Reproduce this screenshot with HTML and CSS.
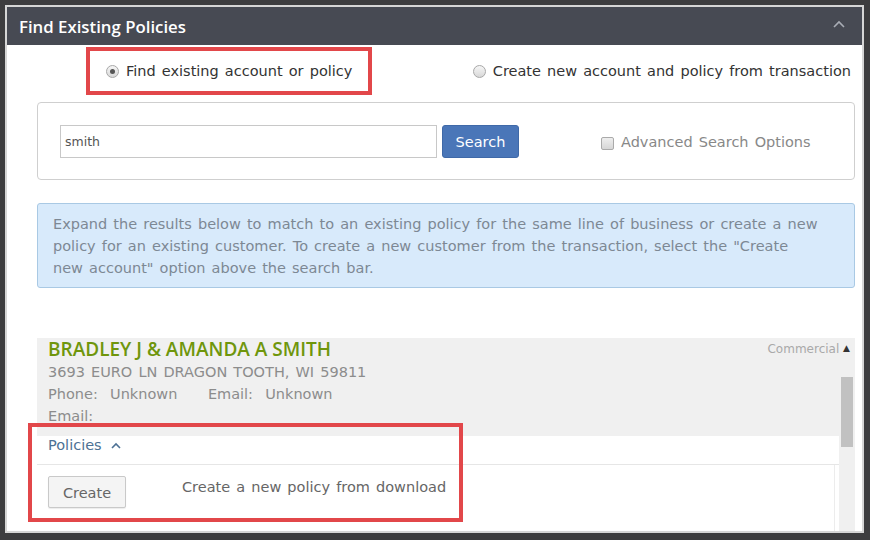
FILE: index.html
```html
<!DOCTYPE html>
<html lang="en">
<head>
  <meta charset="UTF-8" />
  <title>Find Existing Policies</title>
  <link rel="stylesheet" href="styles.css">
</head>
<body>
  <div class="frame">
    <div class="panel">
      <div class="panel-head">
        <h2>Find Existing Policies</h2>
        <svg class="collapse" width="12" height="8" viewBox="0 0 12 8"><path d="M1 7 L6 2 L11 7" fill="none" stroke="#a9adb5" stroke-width="1.6"/></svg>
      </div>

      <div class="panel-body">
        <div class="choices">
          <label class="choice marked"><span class="radio checked"></span>Find existing account or policy</label>
          <label class="choice"><span class="radio"></span>Create new account and policy from transaction</label>
        </div>

        <div class="well">
          <input class="search-input" type="text" value="smith" />
          <button class="btn-search">Search</button>
          <label class="adv"><span class="check"></span>Advanced Search Options</label>
        </div>

        <div class="info">
          Expand the results below to match to an existing policy for the same line of business or create a new<br>
          policy for an existing customer. To create a new customer from the transaction, select the "Create<br>
          new account" option above the search bar.
        </div>

        <div class="result">
          <div class="result-head">
            <span class="name">BRADLEY J &amp; AMANDA A SMITH</span>
            <span class="kind">Commercial <span class="tri">&#9650;</span></span>
          </div>
          <div class="result-body">
            <div class="result-main">
              <div class="addr">
                <div>3693 EURO LN DRAGON TOOTH, WI 59811</div>
                <div>Phone:&nbsp; Unknown &nbsp;&nbsp;&nbsp; Email:&nbsp; Unknown</div>
                <div>Email:</div>
              </div>
              <div class="policies">
                <div class="pol-head">
                  <a class="pol-link">Policies
                    <svg width="10" height="7" viewBox="0 0 10 7"><path d="M1 6 L5 2 L9 6" fill="none" stroke="#4d7194" stroke-width="1.6"/></svg>
                  </a>
                </div>
                <div class="pol-row">
                  <button class="btn-create">Create</button>
                  <span class="pol-text">Create a new policy from download</span>
                </div>
              </div>
            </div>
            <div class="scroll"><div class="thumb"></div></div>
          </div>
          <div class="mark-box"></div>
        </div>
      </div>
    </div>
  </div>
</body>
</html>
```

FILE: styles.css
```css
html, body {
  margin: 0;
  padding: 0;
  height: 540px;
  overflow: hidden;
}
body {
  background: #3d3d3f;
  font-family: 'DejaVu Sans', Verdana, sans-serif;
  font-size: 14.5px;
  word-spacing: 1.5px;
  color: #333;
}
.frame {
  padding: 5px 6px 7px 5px;
  height: 540px;
  box-sizing: border-box;
}
.panel {
  height: 100%;
  box-sizing: border-box;
  border: 2px solid #d6d6d6;
  background: #fff;
  overflow: hidden;
}
.panel-head {
  height: 38px;
  background: #474a53;
  display: flex;
  align-items: center;
  justify-content: space-between;
  padding: 0 17px 0 12px;
}
.panel-head h2 {
  margin: 0;
  font-family: 'Open Sans', sans-serif;
  font-weight: 600;
  font-size: 16.8px;
  word-spacing: 0;
  color: #fff;
}
.collapse {
  margin-top: -4px;
}
.panel-body {
  padding: 0 7px 0 30px;
}
.choices {
  display: flex;
  justify-content: space-between;
  align-items: center;
  margin-top: 2px;
  padding-left: 49px;
  padding-right: 4px;
}
.choice {
  display: flex;
  align-items: center;
  height: 40px;
  color: #333;
}
.choice.marked {
  border: 4px solid #e2474a;
  padding: 0 16px 0 16px;
}
.radio {
  width: 11px;
  height: 11px;
  border-radius: 50%;
  border: 1px solid #a8a8a8;
  background: linear-gradient(#f6f6f6, #d8d8d8);
  margin-right: 7px;
  position: relative;
}
.radio.checked::after {
  content: "";
  position: absolute;
  left: 3px;
  top: 3px;
  width: 5px;
  height: 5px;
  border-radius: 50%;
  background: #555;
}
.well {
  margin-top: 7px;
  border: 1px solid #cfcfcf;
  border-radius: 4px;
  padding: 22px 22px 21px 22px;
  display: flex;
  align-items: center;
}
.search-input {
  width: 377px;
  height: 33px;
  box-sizing: border-box;
  border: 1px solid #c8c8c8;
  padding: 0 4px;
  font-family: 'DejaVu Sans', sans-serif;
  font-size: 12.5px;
  color: #555;
  margin: 0;
}
.btn-search {
  margin-left: 5px;
  width: 77px;
  height: 33px;
  background: #4a76b8;
  border: 1px solid #3f69a8;
  border-radius: 3px;
  color: #fff;
  font-family: 'DejaVu Sans', sans-serif;
  font-size: 14.5px;
  padding: 0;
}
.adv {
  margin-left: 82px;
  display: flex;
  align-items: center;
  color: #888;
}
.check {
  width: 11px;
  height: 11px;
  border: 1px solid #aaa;
  border-radius: 2px;
  background: linear-gradient(#eee, #d6d6d6);
  margin: 3px 7px 0 0;
}
.info {
  margin-top: 23px;
  background: #d8eafb;
  border: 1px solid #a9c9e4;
  border-radius: 3px;
  padding: 9px 15px 8px 15px;
  line-height: 22px;
  color: #7d8894;
  white-space: nowrap;
}
.result {
  margin-top: 50px;
  background: #f0f0f0;
  height: 200px;
  position: relative;
}
.result-head {
  display: flex;
  justify-content: space-between;
  align-items: center;
  height: 22px;
  padding: 0 5px 0 11px;
}
.name {
  font-family: 'Open Sans', sans-serif;
  font-weight: 600;
  font-size: 19px;
  word-spacing: 0;
  color: #6f960c;
}
.kind {
  font-size: 12px;
  word-spacing: 0;
  color: #a9a9a9;
}
.tri {
  color: #333;
  font-size: 9px;
  vertical-align: 2px;
}
.result-body {
  display: flex;
  margin-top: 1px;
}
.result-main {
  flex: 1;
}
.addr {
  padding-left: 11px;
  line-height: 22px;
  color: #8c8c8c;
  margin-bottom: 9px;
}
.policies {
  background: #fff;
}
.pol-head {
  height: 28px;
  line-height: 18px;
  padding: 0 11px;
  border-bottom: 1px solid #e6e6e6;
}
.pol-link {
  color: #4d7194;
}
.pol-link svg {
  margin-left: 3px;
  vertical-align: 1px;
}
.pol-row {
  display: flex;
  align-items: flex-start;
  padding: 11px 11px 30px 11px;
  margin-right: 4px;
  border-right: 1px solid #ececec;
}
.btn-create {
  width: 78px;
  height: 32px;
  background: #f4f4f4;
  border: 1px solid #c9c9c9;
  border-radius: 2px;
  box-shadow: 0 1px 1px rgba(0, 0, 0, 0.08);
  color: #666;
  font-family: 'DejaVu Sans', sans-serif;
  font-size: 14.5px;
  padding: 2px 0 0 0;
}
.pol-text {
  margin: 3px 0 0 56px;
  color: #666;
}
.scroll {
  width: 12px;
  margin: 0 2px;
  padding-top: 16px;
}
.thumb {
  height: 70px;
  background: #c1c1c1;
}
.mark-box {
  position: absolute;
  left: -9px;
  top: 85px;
  width: 435px;
  height: 99px;
  box-sizing: border-box;
  border: 4px solid #e2474a;
}
```
